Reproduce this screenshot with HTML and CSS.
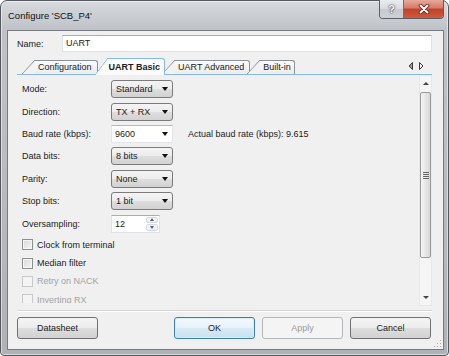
FILE: index.html
```html
<!DOCTYPE html>
<html lang="en">
<head>
    <meta charset="UTF-8">
    <title>Configure 'SCB_P4'</title>
    <link rel="stylesheet" href="styles.css">
</head>
<body>
    <div class="window">
        <!-- 타이틀 바 -->
        <div class="titlebar">
            <span class="title">Configure 'SCB_P4'</span>
            <div class="caption-buttons">
                <span class="cap-btn help">?</span>
                <span class="cap-btn close">
                    <svg width="14" height="10" viewBox="0 0 14 10">
                        <path d="M3.5 1.5 L10.5 8.5 M10.5 1.5 L3.5 8.5" stroke="#5b2016" stroke-width="3.6" stroke-linecap="round"/>
                        <path d="M3.5 1.5 L10.5 8.5 M10.5 1.5 L3.5 8.5" stroke="#fff" stroke-width="2" stroke-linecap="round"/>
                    </svg>
                </span>
            </div>
        </div>

        <div class="client">
            <div class="name-row">
                <span class="name-label">Name:</span>
                <div class="textbox">UART</div>
            </div>

            <!-- 탭 -->
            <div class="tabstrip">
                <div class="tabs">
                    <div class="tab"><span>Configuration</span></div>
                    <div class="tab active"><span>UART Basic</span></div>
                    <div class="tab"><span>UART Advanced</span></div>
                    <div class="tab"><span>Built-in</span></div>
                </div>
                <div class="tab-nav">
                    <svg width="16" height="8" viewBox="0 0 16 8">
                        <path d="M4.5 0.5 L1 4 L4.5 7.5 Z" fill="#9a9a9a" stroke="#3c3c3c" stroke-width="1"/>
                        <path d="M11.5 0.5 L15 4 L11.5 7.5 Z" fill="#f4f4f4" stroke="#3c3c3c" stroke-width="1"/>
                    </svg>
                </div>
            </div>

            <div class="panel">
                <div class="form">
                    <div class="fields">
                        <span>Mode:</span>
                        <div class="combo">Standard</div>
                        <span></span>

                        <span>Direction:</span>
                        <div class="combo">TX + RX</div>
                        <span></span>

                        <span>Baud rate (kbps):</span>
                        <div class="combo editable">9600</div>
                        <span class="actual">Actual baud rate (kbps): 9.615</span>

                        <span>Data bits:</span>
                        <div class="combo">8 bits</div>
                        <span></span>

                        <span>Parity:</span>
                        <div class="combo">None</div>
                        <span></span>

                        <span>Stop bits:</span>
                        <div class="combo">1 bit</div>
                        <span></span>

                        <span>Oversampling:</span>
                        <div class="spin">
                            <span class="spin-value">12</span>
                            <span class="spin-btns">
                                <span class="spin-up"></span>
                                <span class="spin-down"></span>
                            </span>
                        </div>
                        <span></span>
                    </div>

                    <div class="checks">
                        <div class="check"><span class="box"></span>Clock from terminal</div>
                        <div class="check"><span class="box"></span>Median filter</div>
                        <div class="check disabled"><span class="box"></span>Retry on NACK</div>
                        <div class="check disabled"><span class="box"></span>Inverting RX</div>
                    </div>
                </div>

                <!-- 스크롤바 -->
                <div class="vscroll">
                    <div class="sb-arrow up"></div>
                    <div class="sb-track">
                        <div class="sb-thumb"><span class="grip"></span></div>
                    </div>
                    <div class="sb-arrow down"></div>
                </div>
            </div>

            <div class="separator"></div>

            <div class="buttons">
                <div class="btn">Datasheet</div>
                <div class="btn default">OK</div>
                <div class="btn disabled">Apply</div>
                <div class="btn">Cancel</div>
            </div>

            <svg class="grip-corner" width="8" height="8" viewBox="0 0 8 8">
                <rect x="6" y="0" width="1" height="1" fill="#a8a8a8"/>
                <rect x="3" y="3" width="1" height="1" fill="#a8a8a8"/>
                <rect x="6" y="3" width="1" height="1" fill="#a8a8a8"/>
                <rect x="0" y="6" width="1" height="1" fill="#a8a8a8"/>
                <rect x="3" y="6" width="1" height="1" fill="#a8a8a8"/>
                <rect x="6" y="6" width="1" height="1" fill="#a8a8a8"/>
            </svg>
        </div>
    </div>
</body>
</html>
```

FILE: styles.css
```css
body {
    margin: 0;
    font: 9px "Liberation Sans", Arial, sans-serif;
    color: #1b1b1b;
    background: #fff;
}
.window {
    width: 449px;
    height: 356px;
    box-sizing: border-box;
    border: 1px solid #55585d;
    border-radius: 7px 7px 4px 4px;
    background: linear-gradient(to bottom, #d6d9dd 0, #bfc3c8 29px, #aeb2b7 100%);
    box-shadow: inset 0 0 0 1px rgba(255,255,255,0.5);
    padding: 0 4px 5px 6px;
    display: flex;
    flex-direction: column;
}
/* 타이틀 바 */
.titlebar {
    height: 29px;
    display: flex;
    justify-content: space-between;
    align-items: flex-start;
    padding-left: 1px;
}
.title {
    font-size: 9.5px;
    color: #111;
    margin-top: 9px;
}
.caption-buttons {
    display: flex;
    border: 1px solid #5a5f66;
    border-top: none;
    border-radius: 0 0 4px 4px;
    overflow: hidden;
    margin-top: -1px;
}
.cap-btn {
    height: 18px;
    display: flex;
    align-items: center;
    justify-content: center;
}
.help {
    width: 23px;
    border-right: 1px solid #6a6f75;
    background: linear-gradient(to bottom, #e9ecef 0, #d6dbe0 50%, #c4cad0 51%, #ccd2d8 100%);
    color: #fff;
    font: bold 11px "Liberation Sans", Arial, sans-serif;
    text-shadow: 0 0 2px #333, 0 0 1px #333;
}
.close {
    width: 39px;
    background: linear-gradient(to bottom, #e8a99b 0, #d47a66 45%, #c2412a 50%, #cf5a3f 100%);
}
.client {
    position: relative;
    flex: 1;
    background: #f0f0f0;
    border: 1px solid #767b81;
    padding: 0 11px 0 9px;
    display: flex;
    flex-direction: column;
}
.name-row {
    display: flex;
    align-items: center;
    margin-top: 4px;
}
.name-label {
    width: 45px;
}
.textbox {
    flex: 1;
    height: 17px;
    box-sizing: border-box;
    background: #fff;
    border: 1px solid #dfe2e8;
    border-top-color: #abadb3;
    padding-left: 3px;
    line-height: 15px;
}
/* 탭 */
.tabstrip {
    margin-top: 5px;
    height: 18px;
    box-sizing: border-box;
    border-bottom: 1px solid #86b8ec;
    display: flex;
    justify-content: space-between;
    align-items: flex-end;
}
.tabs {
    display: flex;
    align-items: flex-end;
    padding-left: 5px;
}
.tab {
    display: flex;
    height: 14px;
    margin-left: -3px;
}
.tab:first-child {
    margin-left: 0;
}
.tab::before {
    content: "";
    width: 13px;
    background: linear-gradient(to bottom right, transparent calc(50% - 0.6px), #8d9196 50%, #f2f2f2 calc(50% + 0.8px));
}
.tab span {
    border-top: 1px solid #8d9196;
    border-right: 1px solid #8d9196;
    border-top-right-radius: 3px;
    background: linear-gradient(to bottom, #fafafa, #ececec);
    padding: 0 5px 0 3px;
    line-height: 13px;
}
.tab:last-child span {
    padding-right: 3px;
}
.tab.active {
    position: relative;
    z-index: 2;
    height: 17px;
    margin-bottom: -1px;
    font-weight: bold;
}
.tab.active::before {
    background: linear-gradient(to bottom right, transparent calc(50% - 0.6px), #86b8ec 50%, #fbfbfb calc(50% + 0.8px));
}
.tab.active span {
    border-color: #86b8ec;
    background: #fbfbfb;
    line-height: 16px;
    padding: 0 4px 0 1px;
}
.tab-nav {
    align-self: center;
    margin-right: 8px;
    display: flex;
}
/* 내용 영역 */
.panel {
    height: 231px;
    display: flex;
}
.form {
    flex: 1;
    height: 228px;
    overflow: hidden;
    padding: 3px 0 0 5px;
    box-sizing: border-box;
}
.fields {
    display: grid;
    grid-template-columns: 89px 62px auto;
    grid-auto-rows: 22.4px;
    align-items: center;
}
.combo {
    height: 18px;
    box-sizing: border-box;
    border: 1px solid #7b7b7b;
    border-radius: 3px;
    background: linear-gradient(to bottom, #f4f4f4 0, #ececec 50%, #dedede 51%, #d2d2d2 100%);
    display: flex;
    align-items: center;
    justify-content: space-between;
    padding: 0 4px 0 4px;
}
.combo::after {
    content: "";
    border-left: 3.5px solid transparent;
    border-right: 3.5px solid transparent;
    border-top: 4px solid #111;
}
.combo.editable {
    background: #fff;
    border-color: #e3e5ea;
    border-top-color: #b5b8bf;
    border-radius: 0;
    padding-left: 3px;
}
.actual {
    margin-left: 15px;
}
.spin {
    width: 49px;
    height: 18px;
    box-sizing: border-box;
    background: #fff;
    border: 1px solid #dfe2e8;
    border-top-color: #abadb3;
    display: flex;
}
.spin-value {
    flex: 1;
    padding-left: 3px;
    line-height: 16px;
}
.spin-btns {
    width: 12px;
    display: flex;
    flex-direction: column;
    gap: 1px;
    padding: 1px 1px 1px 0;
}
.spin-up, .spin-down {
    flex: 1;
    border: 1px solid #d6dae0;
    border-radius: 2px;
    background: linear-gradient(to bottom, #fbfbfb, #e9ecef);
    display: flex;
    align-items: center;
    justify-content: center;
}
.spin-up::after {
    content: "";
    border-left: 2.5px solid transparent;
    border-right: 2.5px solid transparent;
    border-bottom: 3px solid #4a5f85;
}
.spin-down::after {
    content: "";
    border-left: 2.5px solid transparent;
    border-right: 2.5px solid transparent;
    border-top: 3px solid #4a5f85;
}
.checks {
    margin-top: 1px;
}
.check {
    height: 18.3px;
    display: flex;
    align-items: center;
    gap: 4px;
}
.box {
    width: 11px;
    height: 11px;
    box-sizing: border-box;
    border: 1px solid #8e8f8f;
    background: linear-gradient(135deg, #d7d7d7, #f6f6f6);
    box-shadow: inset 0 0 0 1px #f4f4f4;
}
.check.disabled {
    color: #a3a3a3;
}
.check.disabled .box {
    border-color: #c8c8c8;
    background: #f4f4f4;
}
/* 스크롤바 */
.vscroll {
    width: 13px;
    box-sizing: border-box;
    border: 1px solid #e8e8e8;
    background: #f5f5f5;
    display: flex;
    flex-direction: column;
}
.sb-arrow {
    height: 15px;
    display: flex;
    align-items: center;
    justify-content: center;
}
.sb-arrow.up::after {
    content: "";
    border-left: 3px solid transparent;
    border-right: 3px solid transparent;
    border-bottom: 3px solid #444;
}
.sb-arrow.down::after {
    content: "";
    border-left: 3px solid transparent;
    border-right: 3px solid transparent;
    border-top: 3px solid #444;
}
.sb-track {
    flex: 1;
}
.sb-thumb {
    margin-top: 1px;
    height: 166px;
    box-sizing: border-box;
    border: 1px solid #9a9a9a;
    border-radius: 2px;
    background: linear-gradient(to right, #f6f6f6, #e4e4e4 60%, #d6d6d6);
    display: flex;
    align-items: center;
    justify-content: center;
}
.grip {
    width: 6px;
    height: 5px;
    border-top: 1px solid #666;
    border-bottom: 1px solid #666;
    background: linear-gradient(to bottom, transparent 1px, #666 1px, #666 2px, transparent 2px, transparent 3px, #666 3px, #666 4px, transparent 4px);
}
.separator {
    margin-top: 4px;
    height: 1px;
    background: #d5d5d5;
    border-bottom: 1px solid #fff;
}
.buttons {
    margin-top: 5px;
    display: flex;
    gap: 7px;
    padding-right: 1px;
}
.btn {
    width: 81px;
    height: 22px;
    box-sizing: border-box;
    border: 1px solid #707070;
    border-radius: 3px;
    background: linear-gradient(to bottom, #f4f4f4 0, #ececec 50%, #dedede 51%, #d1d1d1 100%);
    display: flex;
    align-items: center;
    justify-content: center;
}
.btn:first-child {
    margin-right: auto;
}
.btn.default {
    border-color: #3c7fb1;
    background: linear-gradient(to bottom, #f3f9fc 0, #e7f2f9 50%, #d8eaf5 51%, #c9e1f0 100%);
    box-shadow: inset 0 0 0 1px #d6ecfa;
}
.btn.disabled {
    border-color: #b5b8bb;
    background: #f4f4f4;
    color: #9a9a9a;
}
.grip-corner {
    position: absolute;
    right: 1px;
    bottom: 1px;
}
```
